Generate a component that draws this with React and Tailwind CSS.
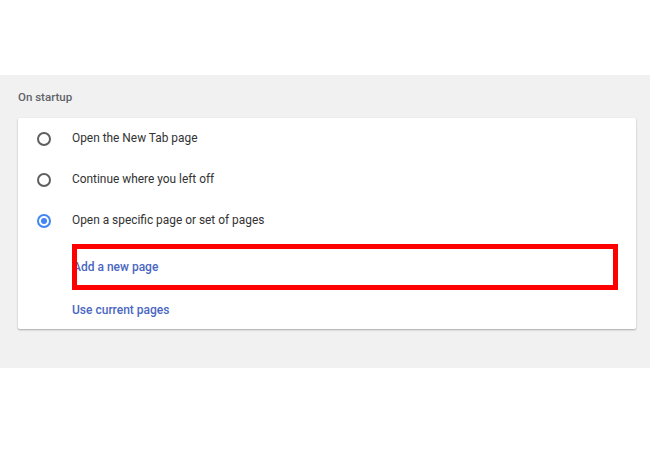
const options = [
  { label: "Open the New Tab page", checked: false },
  { label: "Continue where you left off", checked: false },
  { label: "Open a specific page or set of pages", checked: true },
];

const Radio = ({ checked }) =>
  checked ? (
    <div className="w-[14px] h-[14px] rounded-full border-2 border-[#4285f4] flex items-center justify-center">
      <div className="w-[6px] h-[6px] rounded-full bg-[#4285f4]" />
    </div>
  ) : (
    <div className="w-[14px] h-[14px] rounded-full border-2 border-[#5f5f5f]" />
  );

export default function App() {
  return (
    <div className="w-[650px] h-[450px] bg-white font-['Roboto',sans-serif]">
      <div className="h-[75px]" />

      {/* Settings section */}
      <div className="bg-[#f1f1f1] pt-[14px] pb-[39px] px-[18px] w-[650px]">
        <div className="h-4 leading-4 text-[11.5px] font-medium text-[#5f6368]">On startup</div>

        <div className="mt-[13px] w-[618px] bg-white rounded-[2px] shadow-[0_1px_2px_rgba(0,0,0,0.3)]">
          {options.map((opt) => (
            <div key={opt.label} className="h-[41px] flex items-center pl-[19px]">
              <Radio checked={opt.checked} />
              <span className="ml-[21px] text-[11.9px] text-[#333333]">{opt.label}</span>
            </div>
          ))}

          <div className="relative h-[49px] pt-[3px] flex items-center pl-[55px]">
            <span className="text-[12px] font-medium text-[#4a67c2]">Add a new page</span>
            {/* highlight annotation */}
            <div className="absolute left-[54px] right-[18px] top-[3px] h-[46px] border-[5px] border-[#ff0000]" />
          </div>

          <div className="h-[39px] flex items-center pl-[54px]">
            <span className="text-[12px] font-medium text-[#4a67c2]">Use current pages</span>
          </div>
        </div>
      </div>
    </div>
  );
}
